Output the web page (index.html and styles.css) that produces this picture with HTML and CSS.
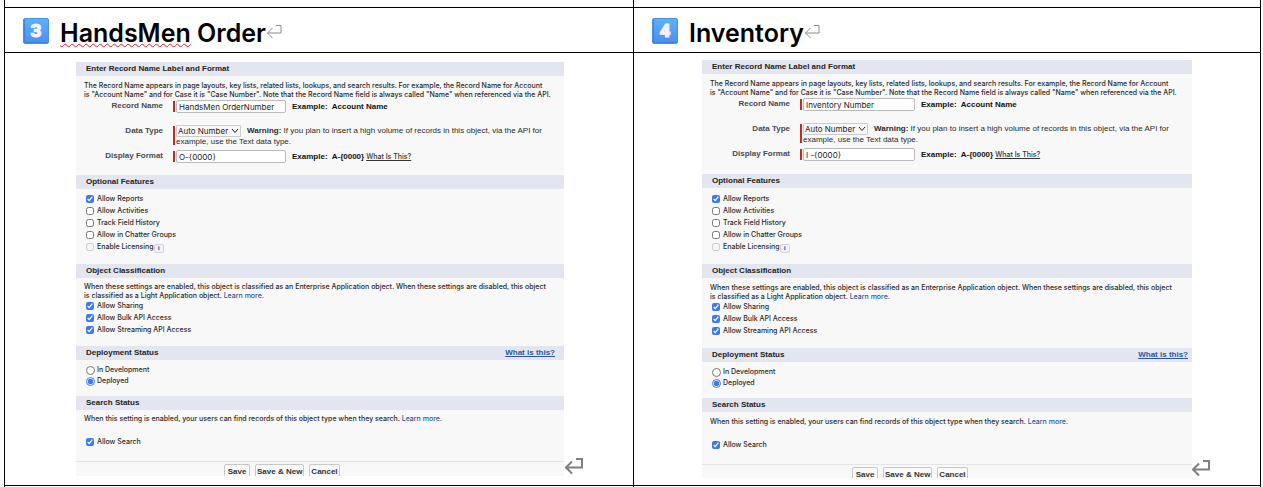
FILE: index.html
```html
<!DOCTYPE html>
<html lang="en">
<head>
<meta charset="utf-8">
<title>Custom objects</title>
<link rel="stylesheet" href="styles.css">
</head>
<body>
<main class="sheet">
  <div class="cell cell-spacer"></div>
  <div class="cell cell-spacer"></div>

  <div class="cell cell-title">
    <span class="keycap">3</span>
    <h1 class="title"><span class="misspelled">HandsMen</span> Order</h1>
    <svg class="mark mark-title" viewBox="0 0 16 15"><path d="M10 1.5h5v7.500H1.500M6.500 4L1.500 9l5 5"/></svg>
  </div>
  <div class="cell cell-title">
    <span class="keycap">4</span>
    <h1 class="title">Inventory</h1>
    <svg class="mark mark-title" viewBox="0 0 16 15"><path d="M10 1.5h5v7.500H1.500M6.500 4L1.500 9l5 5"/></svg>
  </div>

  <div class="cell cell-form">
    <form class="card">
      <h2 class="bar">Enter Record Name Label and Format</h2>
      <section class="body body-record">
        <p class="note">The Record Name appears in page layouts, key lists, related lists, lookups, and search results. For example, the Record Name for Account<br>is "Account Name" and for Case it is "Case Number". Note that the Record Name field is always called "Name" when referenced via the API.</p>
        <div class="field">
          <label class="name" for="a-name">Record Name</label>
          <div class="required"><input class="text" id="a-name" type="text" value="HandsMen OrderNumber"><b class="example">Example:&nbsp; Account Name</b></div>
        </div>
        <div class="field field-type">
          <label class="name" for="a-type">Data Type</label>
          <div class="required">
            <div class="pick"><span class="pick-box"><select class="select" id="a-type"><option>Auto Number</option></select><svg class="chevron" viewBox="0 0 8 6"><path d="M1 1l3 3.500L7 1"/></svg></span><span class="warning"><b>Warning:</b> If you plan to insert a high volume of records in this object, via the API for</span></div>
            <div class="more">example, use the Text data type.</div>
          </div>
        </div>
        <div class="field">
          <label class="name" for="a-format">Display Format</label>
          <div class="required"><input class="text" id="a-format" type="text" value="O-{0000}"><b class="example">Example:&nbsp; A-{0000}</b><a class="help" href="#">What Is This?</a></div>
        </div>
      </section>
      <h2 class="bar">Optional Features</h2>
      <section class="body body-features">
        <label class="check"><input type="checkbox" checked>Allow Reports</label>
        <label class="check"><input type="checkbox">Allow Activities</label>
        <label class="check"><input type="checkbox">Track Field History</label>
        <label class="check"><input type="checkbox">Allow in Chatter Groups</label>
        <div class="check-row"><label class="check"><input type="checkbox" disabled>Enable Licensing</label><button class="info" type="button">i</button></div>
      </section>
      <h2 class="bar">Object Classification</h2>
      <section class="body body-class">
        <p class="note">When these settings are enabled, this object is classified as an Enterprise Application object. When these settings are disabled, this object<br>is classified as a Light Application object. <a class="link" href="#">Learn more.</a></p>
        <label class="check"><input type="checkbox" checked>Allow Sharing</label>
        <label class="check"><input type="checkbox" checked>Allow Bulk API Access</label>
        <label class="check"><input type="checkbox" checked>Allow Streaming API Access</label>
      </section>
      <h2 class="bar">Deployment Status <a class="bar-link" href="#">What is this?</a></h2>
      <section class="body body-deploy">
        <label class="radio"><input type="radio" name="a-status">In Development</label>
        <label class="radio"><input type="radio" name="a-status" checked>Deployed</label>
      </section>
      <h2 class="bar">Search Status</h2>
      <section class="body body-search">
        <p class="note">When this setting is enabled, your users can find records of this object type when they search. <a class="link" href="#">Learn more.</a></p>
        <label class="check"><input type="checkbox" checked>Allow Search</label>
      </section>
      <footer class="actions"><button class="btn" type="button">Save</button><button class="btn" type="button">Save &amp; New</button><button class="btn" type="button">Cancel</button></footer>
    </form>
    <svg class="mark mark-cell" viewBox="0 0 18 17"><path d="M11 1h6v8.500H1.500M7 3.500l-6 6 6 6"/></svg>
  </div>

  <div class="cell cell-form cell-form-wide">
    <form class="card card-wide">
      <h2 class="bar">Enter Record Name Label and Format</h2>
      <section class="body body-record">
        <p class="note">The Record Name appears in page layouts, key lists, related lists, lookups, and search results. For example, the Record Name for Account<br>is "Account Name" and for Case it is "Case Number". Note that the Record Name field is always called "Name" when referenced via the API.</p>
        <div class="field">
          <label class="name" for="b-name">Record Name</label>
          <div class="required"><input class="text" id="b-name" type="text" value="Inventory Number"><b class="example">Example:&nbsp; Account Name</b></div>
        </div>
        <div class="field field-type">
          <label class="name" for="b-type">Data Type</label>
          <div class="required">
            <div class="pick"><span class="pick-box"><select class="select" id="b-type"><option>Auto Number</option></select><svg class="chevron" viewBox="0 0 8 6"><path d="M1 1l3 3.500L7 1"/></svg></span><span class="warning"><b>Warning:</b> If you plan to insert a high volume of records in this object, via the API for</span></div>
            <div class="more">example, use the Text data type.</div>
          </div>
        </div>
        <div class="field">
          <label class="name" for="b-format">Display Format</label>
          <div class="required"><input class="text" id="b-format" type="text" value="I -{0000}"><b class="example">Example:&nbsp; A-{0000}</b><a class="help" href="#">What Is This?</a></div>
        </div>
      </section>
      <h2 class="bar">Optional Features</h2>
      <section class="body body-features">
        <label class="check"><input type="checkbox" checked>Allow Reports</label>
        <label class="check"><input type="checkbox">Allow Activities</label>
        <label class="check"><input type="checkbox">Track Field History</label>
        <label class="check"><input type="checkbox">Allow in Chatter Groups</label>
        <div class="check-row"><label class="check"><input type="checkbox" disabled>Enable Licensing</label><button class="info" type="button">i</button></div>
      </section>
      <h2 class="bar">Object Classification</h2>
      <section class="body body-class">
        <p class="note">When these settings are enabled, this object is classified as an Enterprise Application object. When these settings are disabled, this object<br>is classified as a Light Application object. <a class="link" href="#">Learn more.</a></p>
        <label class="check"><input type="checkbox" checked>Allow Sharing</label>
        <label class="check"><input type="checkbox" checked>Allow Bulk API Access</label>
        <label class="check"><input type="checkbox" checked>Allow Streaming API Access</label>
      </section>
      <h2 class="bar">Deployment Status <a class="bar-link" href="#">What is this?</a></h2>
      <section class="body body-deploy">
        <label class="radio"><input type="radio" name="b-status">In Development</label>
        <label class="radio"><input type="radio" name="b-status" checked>Deployed</label>
      </section>
      <h2 class="bar">Search Status</h2>
      <section class="body body-search">
        <p class="note">When this setting is enabled, your users can find records of this object type when they search. <a class="link" href="#">Learn more.</a></p>
        <label class="check"><input type="checkbox" checked>Allow Search</label>
      </section>
      <footer class="actions"><button class="btn" type="button">Save</button><button class="btn" type="button">Save &amp; New</button><button class="btn" type="button">Cancel</button></footer>
    </form>
    <svg class="mark mark-cell" viewBox="0 0 18 17"><path d="M11 1h6v8.500H1.500M7 3.500l-6 6 6 6"/></svg>
  </div>

  <div class="cell cell-end"></div>
  <div class="cell cell-end"></div>
</main>
</body>
</html>
```

FILE: styles.css
```css
* { box-sizing: border-box; }

body {
  margin: 0 2px 0 4px;
  background: #fff;
  color: #2a2a2a;
  font: 500 7px/9px Inter, sans-serif;
}

h1, h2, p { margin: 0; }

/* Two-column ruled table */
.sheet {
  display: grid;
  grid-template-columns: 629fr 626fr;
  border: solid #000;
  border-width: 0 1px;
}
.cell { min-width: 0; border-bottom: 1px solid #000; }
.cell:nth-child(odd) { border-right: 1px solid #000; }
.cell-spacer { height: 8px; }
.cell-end { height: 1px; border-bottom: 0; }

.cell-title {
  display: flex;
  align-items: center;
  height: 45px;
  padding: 2px 18px 0;
}
.keycap {
  width: 26px;
  height: 26px;
  border: 1px solid #4a8fe8;
  border-radius: 2px;
  background: linear-gradient(#5cb0fb, #4a90ee);
  box-shadow: inset 1px -1px 1px #3f83de;
  color: #f8eeff;
  font: 900 19px/24px Roboto, sans-serif;
  text-align: center;
  -webkit-text-stroke: 1px #f8eeff;
}
.title {
  margin-left: 11px;
  padding-top: 3px;
  color: #000;
  font: 600 25px/32px Inter, sans-serif;
  white-space: nowrap;
}
.misspelled {
  text-decoration: underline wavy #f01c20 1px;
  text-underline-offset: 1px;
  text-decoration-skip-ink: none;
}
.mark { flex: none; fill: none; }
.mark-title { width: 16px; height: 15px; stroke: #8c8c8c; }
.mark-cell { width: 18px; height: 17px; margin: 0 0 1px 1px; stroke: #808080; stroke-width: 2; }

.cell-form {
  display: flex;
  align-items: flex-end;
  padding: 9px 50px 9px 71px;
}
.cell-form-wide { padding: 7px 50px 7px 68px; }
.cell-form-wide .mark-cell { margin-left: 0; }

/* Settings card */
.card {
  flex: 1;
  min-width: 0;
  overflow: hidden;
  background: #f8f8f8;
  --label: 87px;
  --field: 110px;
}
.card-wide { --label: 88px; --field: 112px; }
.bar {
  display: flex;
  justify-content: space-between;
  padding: 0 9px 0 10px;
  background: #e3e6ef;
  color: #222;
  font: bold 8px/14px "Liberation Sans", Arial, sans-serif;
}
.card-wide .bar { padding-right: 4px; }
.bar-link { color: #2a56a5; text-decoration: underline; }
.link { color: #2a56a5; text-decoration: none; }
.body { display: flex; flex-direction: column; }
.note { padding-left: 8px; white-space: nowrap; }

.field {
  display: grid;
  grid-template-columns: var(--label) 1fr;
  column-gap: 10px;
  margin-bottom: 12px;
}
.field-type { margin-bottom: 4px; }
.name {
  color: #4a4a56;
  font: bold 8px/11px "Liberation Sans", Arial, sans-serif;
  text-align: right;
}
.required { position: relative; padding-left: 3px; line-height: 13px; white-space: nowrap; }
.required::before {
  content: "";
  position: absolute;
  inset: 1px auto 1px 0;
  width: 2px;
  background: #c22b22;
}
.text {
  width: var(--field);
  height: 13px;
  padding: 0 2px;
  border: 1px solid #bbb;
  border-radius: 2px;
  background: #fff;
  color: #222;
  font: 8px/11px Inter, sans-serif;
  vertical-align: top;
}
.example {
  margin-left: 6px;
  color: #111;
  font: bold 8px/13px "Liberation Sans", Arial, sans-serif;
}
.help { margin-left: 2px; color: #333; }
.pick { display: flex; }
.pick-box { position: relative; height: 12px; }
.select {
  display: block;
  width: 65px;
  height: 12px;
  padding: 0 1px;
  border: 1px solid #ccc;
  border-radius: 1px;
  background: #f8f8f8;
  color: #222;
  font: 8px/10px Inter, sans-serif;
  appearance: none;
}
.chevron {
  position: absolute;
  top: 3px;
  right: 2px;
  width: 8px;
  height: 6px;
  fill: none;
  stroke: #222;
  pointer-events: none;
}
.warning { margin-left: 6px; font: 8px/12px "Liberation Sans", Arial, sans-serif; }
.more { font: 8px/9px "Liberation Sans", Arial, sans-serif; }

.check, .radio { display: flex; align-items: center; height: 12px; padding: 0 0 1px 10px; }
.check input { width: 8px; height: 8px; margin: 1px 3px 0 0; accent-color: #3b78f5; }
.radio { height: 11px; }
.radio input { width: 9px; height: 9px; margin: 2px 2px 0 0; accent-color: #3b78f5; }
.check-row { display: flex; }
.info {
  width: 10px;
  height: 9px;
  margin-top: 3px;
  padding: 0;
  border: 1px solid #d0d4dc;
  border-radius: 2px;
  background: #f0f3f8;
  color: #2a66c8;
  font: bold 7px/7px "Liberation Serif", serif;
}

.body-record { padding: 5px 0 0; }
.body-record .note { margin-bottom: 1px; }
.body-features { padding: 4px 0 11px; }
.body-class { padding: 4px 0 10px; }
.body-deploy { padding: 4px 0 10px; }
.body-search { padding: 4px 0 13px; }
.body-search .note { margin-bottom: 13px; }
.card-wide .body-record { padding-bottom: 1px; }
.card-wide .body-features { padding: 5px 0 11px; }
.card-wide .body-class { padding: 5px 0 11px; }
.card-wide .body-search { padding: 5px 0 13px; }

.actions {
  display: flex;
  gap: 5px;
  height: 15px;
  padding: 2px 0 0 148px;
  border-top: 1px solid #e4e4e4;
}
.card-wide .actions { height: 14px; padding-left: 150px; }
.btn {
  flex: none;
  min-width: 26px;
  height: 15px;
  padding: 0 1px;
  border: 1px solid #c8c8c8;
  border-radius: 2px;
  background: #fafafa;
  color: #333;
  font: bold 8px/13px "Liberation Sans", Arial, sans-serif;
}
```
